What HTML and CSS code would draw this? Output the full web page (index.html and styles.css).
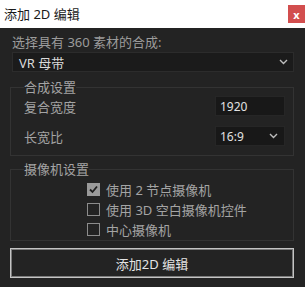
FILE: index.html
```html
<!DOCTYPE html>
<html lang="zh">
<head>
<meta charset="utf-8">
<link rel="stylesheet" href="styles.css">
</head>
<body>
<div class="titlebar">
  <span class="title">添加 2D 编辑</span>
  <span class="close">x</span>
</div>
<div class="main">
  <div class="prompt">选择具有 360 素材的合成:</div>
  <div class="select wide">
    <span>VR 母带</span>
    <svg class="chev" width="9" height="6" viewBox="0 0 9 6"><polyline points="1,1 4.5,4.5 8,1" fill="none" stroke="#bdbdbd" stroke-width="1.4"/></svg>
  </div>
  <fieldset class="group first">
    <legend>合成设置</legend>
    <div class="row">
      <span class="label">复合宽度</span>
      <div class="field">1920</div>
    </div>
    <div class="row">
      <span class="label">长宽比</span>
      <div class="field select-sm">
        <span>16:9</span>
        <svg class="chev" width="9" height="6" viewBox="0 0 9 6"><polyline points="1,1 4.5,4.5 8,1" fill="none" stroke="#bdbdbd" stroke-width="1.4"/></svg>
      </div>
    </div>
  </fieldset>
  <fieldset class="group second">
    <legend>摄像机设置</legend>
    <div class="checks">
      <div class="check">
        <span class="box checked"><svg width="11" height="11" viewBox="0 0 11 11"><polyline points="2,5.5 4.5,8 9,2.5" fill="none" stroke="#1e1e1e" stroke-width="1.8"/></svg></span>
        <span>使用 2 节点摄像机</span>
      </div>
      <div class="check">
        <span class="box"></span>
        <span>使用 3D 空白摄像机控件</span>
      </div>
      <div class="check">
        <span class="box"></span>
        <span>中心摄像机</span>
      </div>
    </div>
  </fieldset>
  <div class="button">添加2D 编辑</div>
</div>
</body>
</html>
```

FILE: styles.css
```css
html, body {
  margin: 0;
  padding: 0;
  background: #232323;
  width: 305px;
  height: 287px;
  overflow: hidden;
}
body {
  font-family: "Noto Sans", "Noto Sans CJK SC", sans-serif;
  font-size: 13px;
  color: #a4a4a4;
}
.titlebar {
  height: 28px;
  background: #ffffff;
  display: flex;
  align-items: center;
  justify-content: space-between;
  padding-left: 4px;
}
.title {
  color: #1a1a1a;
  line-height: 16px;
}
.close {
  width: 17px;
  height: 18px;
  background: #d24e4e;
  color: #ffffff;
  font-size: 11px;
  font-weight: bold;
  display: flex;
  align-items: center;
  justify-content: center;
  line-height: 1;
}
.main {
  padding: 4px 11px 0 10px;
}
.prompt {
  line-height: 20px;
  padding-left: 2px;
  color: #9c9c9c;
}
.select {
  display: flex;
  align-items: center;
  justify-content: space-between;
  box-sizing: border-box;
  background: #1b1b1b;
  border: 1px solid #2c2c2c;
  color: #dadada;
}
.wide {
  margin-left: 2px;
  height: 20px;
  padding: 0 5px 0 6px;
}
.chev {
  display: block;
}
.group {
  margin: 6px 0 0 0;
  border: 1px solid #333333;
  padding: 0 8px 0 13px;
}
.group legend {
  padding: 0;
  line-height: 17px;
  color: #a4a4a4;
}
.first {
  margin-top: 7px;
  padding-bottom: 9px;
}
.row {
  display: flex;
  align-items: center;
  justify-content: space-between;
  height: 20px;
}
.row + .row {
  margin-top: 10px;
}
.label {
  color: #a4a4a4;
}
.field {
  box-sizing: border-box;
  width: 70px;
  height: 20px;
  background: #181818;
  border: 1px solid #262626;
  color: #e2e2e2;
  padding: 0 4px;
  display: flex;
  align-items: center;
  font-size: 12px;
}
.select-sm {
  justify-content: space-between;
  padding-right: 6px;
}
.second {
  margin-top: 5px;
  padding-top: 1px;
  padding-bottom: 1px;
}
.checks {
  margin-left: 63px;
}
.check {
  display: flex;
  align-items: center;
  height: 20px;
  gap: 6px;
  color: #a4a4a4;
}
.box {
  box-sizing: border-box;
  width: 13px;
  height: 13px;
  border: 1.5px solid #8c8c8c;
  display: flex;
  align-items: center;
  justify-content: center;
}
.box.checked {
  background: #9a9a9a;
  border-color: #9a9a9a;
}
.button {
  margin-top: 7px;
  height: 30px;
  box-sizing: border-box;
  border: 1px solid #c4c4c4;
  box-shadow: inset 0 0 0 1px #7a7a7a;
  display: flex;
  align-items: center;
  justify-content: center;
  color: #e4e4e4;
}
```
